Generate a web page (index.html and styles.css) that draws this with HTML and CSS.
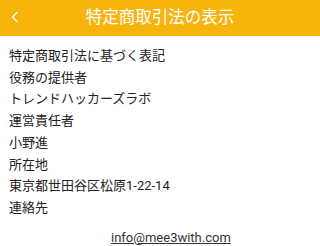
FILE: index.html
```html
<!DOCTYPE html>
<html lang="ja">
<head>
<meta charset="utf-8">
<link rel="stylesheet" href="styles.css">
</head>
<body>
<header class="bar">
  <span class="back"><svg width="8" height="12" viewBox="0 0 8 12"><path d="M6.5 1 L1.5 6 L6.5 11" fill="none" stroke="#fff" stroke-width="1.3"/></svg></span>
  <h1 class="title">特定商取引法の表示</h1>
</header>
<main class="content">
  <p class="line">特定商取引法に基づく表記</p>
  <p class="line">役務の提供者</p>
  <p class="line">トレンドハッカーズラボ</p>
  <p class="line">運営責任者</p>
  <p class="line">小野進</p>
  <p class="line">所在地</p>
  <p class="line">東京都世田谷区松原1-22-14</p>
  <p class="line">連絡先</p>
  <p class="mail"><a href="#">info@mee3with.com</a></p>
</main>
</body>
</html>
```
FILE: styles.css
```css
html, body {
  margin: 0;
  padding: 0;
  background: #fff;
  font-family: Roboto, "Noto Sans CJK JP", sans-serif;
}
.bar {
  height: 36px;
  background: #f6b40c;
  display: flex;
  align-items: center;
  justify-content: center;
  position: relative;
}
.back {
  position: absolute;
  left: 11px;
  top: 11px;
  display: flex;
}
.title {
  margin: 0;
  font-size: 16.5px;
  font-weight: normal;
  color: #fff;
  line-height: 1;
}
.content {
  padding: 9px 9px 0 9px;
}
.line {
  margin: 0;
  font-size: 13px;
  line-height: 21.7px;
  color: #222;
}
.mail {
  margin: 8px 0 0 0;
  padding-left: 102px;
  font-size: 13px;
  line-height: 21px;
}
.mail a {
  color: #333;
  text-decoration: underline;
}
```
